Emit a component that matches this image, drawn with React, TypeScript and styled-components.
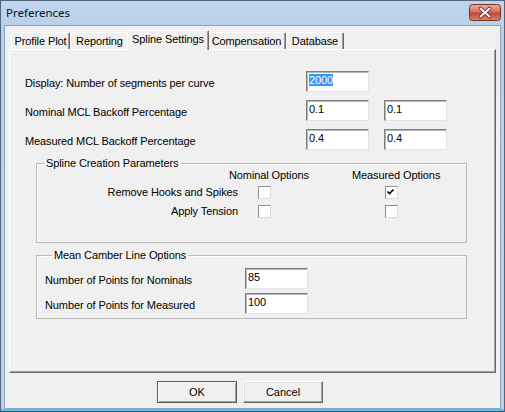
import React from "react";
import styled, { createGlobalStyle } from "styled-components";

const GlobalStyle = createGlobalStyle`
  html, body {
    margin: 0;
    padding: 0;
    background: #fff;
  }
  body {
    font-family: "Liberation Sans", Arial, sans-serif;
    font-size: 11px;
    letter-spacing: -0.1px;
    color: #000;
  }
  * {
    box-sizing: border-box;
  }
`;

const tabs = [
  { name: "Profile Plot", width: 59 },
  { name: "Reporting", width: 59 },
  { name: "Spline Settings", width: 78, active: true },
  { name: "Compensation", width: 79 },
  { name: "Database", width: 58 },
];

const CloseIcon = () => (
  <svg width="32" height="17" viewBox="0 0 32 17">
    <defs>
      <linearGradient id="closeFill" x1="0" y1="0" x2="0" y2="1">
        <stop offset="0" stopColor="#eab0a4" />
        <stop offset="0.45" stopColor="#d6705b" />
        <stop offset="0.55" stopColor="#c24b33" />
        <stop offset="1" stopColor="#d88566" />
      </linearGradient>
    </defs>
    <rect x="0.5" y="0.5" width="31" height="16" rx="3" fill="url(#closeFill)" stroke="#7a2f22" />
    <path d="M11.5 4.5 L20.5 12.5 M20.5 4.5 L11.5 12.5" stroke="#5a2218" strokeWidth="3.6" strokeLinecap="round" />
    <path d="M11.5 4.5 L20.5 12.5 M20.5 4.5 L11.5 12.5" stroke="#fff" strokeWidth="2" strokeLinecap="round" />
  </svg>
);

// small classic checkbox tick, sits left of centre
const CheckMark = () => (
  <svg width="11" height="11" viewBox="0 0 11 11">
    <polyline points="1.5,4.5 3.5,6.5 7.5,2.5" fill="none" stroke="#000" strokeWidth="1.6" />
  </svg>
);

const App = () => {
  return (
    <>
      <GlobalStyle />
      <Window>
        <TitleBar>
          <Title>Preferences</Title>
          <CloseButton>
            <CloseIcon />
          </CloseButton>
        </TitleBar>
        <Client>
          <TabStrip>
            {tabs.map((t) => (
              <Tab key={t.name} $width={t.width} $active={!!t.active}>
                {t.name}
              </Tab>
            ))}
          </TabStrip>
          <Panel>
            <SettingsGrid>
              <Label>Display: Number of segments per curve</Label>
              <TextBox>
                <Selected>2000</Selected>
              </TextBox>
              <span />
              <Label>Nominal MCL Backoff Percentage</Label>
              <TextBox>0.1</TextBox>
              <TextBox>0.1</TextBox>
              <Label>Measured MCL Backoff Percentage</Label>
              <TextBox>0.4</TextBox>
              <TextBox>0.4</TextBox>
            </SettingsGrid>

            <GroupBox $top={8} $pad="0 0 24px 0">
              <Legend>Spline Creation Parameters</Legend>
              <HeaderRow>
                <span />
                <span>Nominal Options</span>
                <span>Measured Options</span>
              </HeaderRow>
              <CheckGrid>
                <CheckLabel>Remove Hooks and Spikes</CheckLabel>
                <CheckBox />
                <CheckBox>
                  <CheckMark />
                </CheckBox>
                <CheckLabel>Apply Tension</CheckLabel>
                <CheckBox />
                <CheckBox />
              </CheckGrid>
            </GroupBox>

            <GroupBox $top={7} $pad="7px 0 4px 8px">
              <Legend>Mean Camber Line Options</Legend>
              <FieldGrid>
                <Label>Number of Points for Nominals</Label>
                <TextBox>85</TextBox>
                <Label>Number of Points for Measured</Label>
                <TextBox>100</TextBox>
              </FieldGrid>
            </GroupBox>
          </Panel>
          <ButtonRow>
            <Button $default>OK</Button>
            <Button>Cancel</Button>
          </ButtonRow>
        </Client>
      </Window>
    </>
  );
};

const Window = styled.div`
  width: 505px;
  height: 412px;
  display: flex;
  flex-direction: column;
  border: 1px solid #53667b;
  border-bottom-color: #17607f;
  padding: 0 3px 2px 3px;
  background: linear-gradient(to bottom, #c0d5ed 0px, #b9d0ea 24px, #bcd2eb 100%);
  box-shadow: inset 0 -2px 0 #5fbde6;
`;

const TitleBar = styled.div`
  height: 24px;
  display: flex;
  justify-content: space-between;
  align-items: flex-start;
`;

const Title = styled.div`
  font-family: "Noto Sans", "Liberation Sans", sans-serif;
  font-size: 11.5px;
  letter-spacing: 0;
  line-height: 16px;
  padding: 4px 0 0 2px;
  color: #111;
`;

const CloseButton = styled.div`
  margin-top: 3px;
  width: 32px;
  height: 17px;
  display: flex;
`;

const Client = styled.div`
  flex: 1;
  display: flex;
  flex-direction: column;
  background: #f0f0f0;
  border: 1px solid #8ca4bf;
  padding: 4px 4px 0 4px;
`;

const TabStrip = styled.div`
  height: 19px;
  display: flex;
  align-items: flex-end;
  padding-left: 2px;
`;

const Tab = styled.div<{ $width: number; $active: boolean }>`
  width: ${(p) => p.$width + (p.$active ? 4 : 0)}px;
  height: ${(p) => (p.$active ? 20 : 17)}px;
  margin: ${(p) => (p.$active ? "0 -2px -1px -2px" : "0")};
  position: ${(p) => (p.$active ? "relative" : "static")};
  z-index: ${(p) => (p.$active ? 2 : "auto")};
  background: #f0f0f0;
  border: 1px solid;
  border-bottom: none;
  border-color: #fff #696969 transparent #fff;
  border-radius: 2px 2px 0 0;
  box-shadow: inset -1px 0 0 #a0a0a0;
  text-align: center;
  line-height: 16px;
  white-space: nowrap;
`;

const Panel = styled.div`
  height: 324px;
  display: flex;
  flex-direction: column;
  border: 1px solid;
  border-color: #fff #696969 #696969 #fff;
  box-shadow: inset -1px -1px 0 #a0a0a0;
  padding-top: 21px;
`;

const SettingsGrid = styled.div`
  display: grid;
  grid-template-columns: 266px 63px 63px;
  grid-auto-rows: 21px;
  column-gap: 15px;
  row-gap: 8px;
  margin-left: 15px;
`;

const Label = styled.div`
  align-self: center;
  padding-top: 2px;
  white-space: nowrap;
`;

const TextBox = styled.div`
  height: 21px;
  background: #fff;
  border: 1px solid;
  border-color: #7f7f7f #e3e3e3 #e3e3e3 #7f7f7f;
  box-shadow: inset 1px 1px 0 #b4b4b4;
  padding: 1px 2px;
  line-height: 14px;
  white-space: nowrap;
`;

const Selected = styled.span`
  background: #3399ff;
  color: #fff;
`;

const GroupBox = styled.fieldset<{ $top: number; $pad: string }>`
  margin: ${(p) => p.$top}px 0 0 26px;
  width: 431px;
  min-inline-size: 0;
  border: 1px solid #b9b9b9;
  box-shadow: inset 1px 1px 0 #fff;
  padding: ${(p) => p.$pad};
`;

const Legend = styled.legend`
  margin-left: 7px;
  padding: 0 2px;
  line-height: 11px;
  font-size: 11px;
`;

const HeaderRow = styled.div`
  display: grid;
  grid-template-columns: 192px 123px auto;
  line-height: 13px;
  white-space: nowrap;
`;

const CheckGrid = styled.div`
  display: grid;
  grid-template-columns: 221px 127px 13px;
  grid-auto-rows: 13px;
  row-gap: 6px;
  margin-top: 4px;
`;

const CheckLabel = styled.div`
  text-align: right;
  padding-right: 20px;
  line-height: 13px;
  white-space: nowrap;
`;

const CheckBox = styled.div`
  width: 13px;
  height: 13px;
  background: #fff;
  border: 1px solid;
  border-color: #8e8f8f #dcdcdc #dcdcdc #8e8f8f;
  display: flex;
  align-items: center;
  justify-content: center;
`;

const FieldGrid = styled.div`
  display: grid;
  grid-template-columns: 200px 63px;
  grid-auto-rows: 21px;
  row-gap: 4px;
`;

const ButtonRow = styled.div`
  display: flex;
  gap: 6px;
  margin-top: 8px;
  padding-left: 148px;
`;

const Button = styled.button<{ $default?: boolean }>`
  width: 80px;
  height: 22px;
  padding: 0;
  font-family: "Liberation Sans", Arial, sans-serif;
  font-size: 11px;
  color: #000;
  background: #f0f0f0;
  border: 1px solid;
  border-color: ${(p) => (p.$default ? "#5c5c5c" : "#fff #696969 #696969 #fff")};
  box-shadow: ${(p) =>
    p.$default
      ? "inset 1px 1px 0 #fff, inset -1px -1px 0 #a0a0a0"
      : "inset -1px -1px 0 #a0a0a0, inset 1px 1px 0 #e3e3e3"};
`;

export default App;
